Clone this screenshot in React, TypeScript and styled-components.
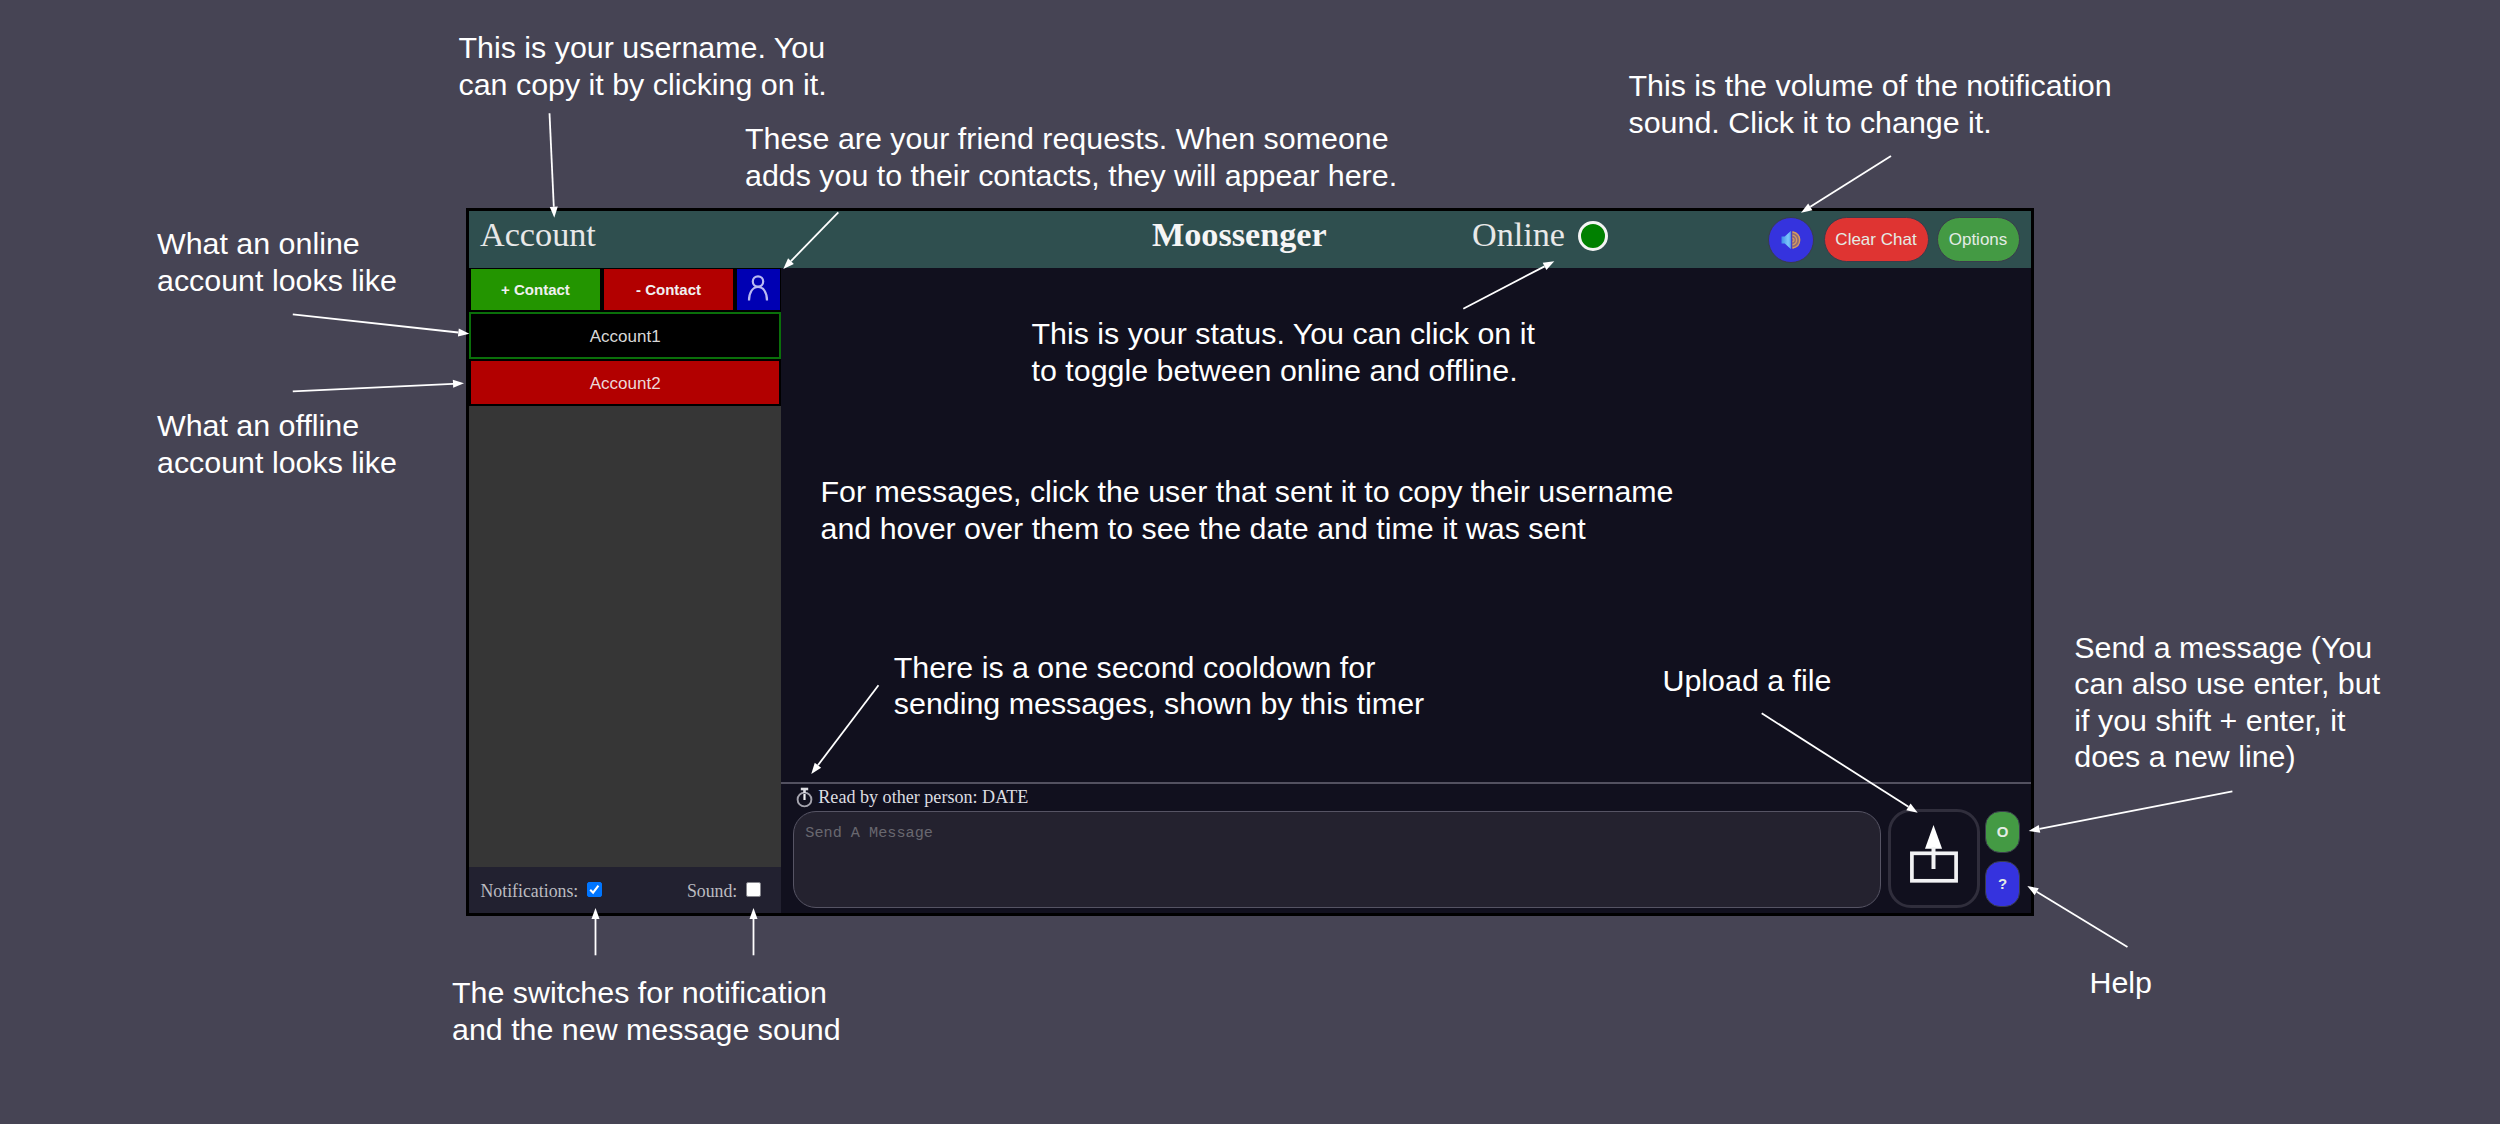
import React from "react";
import styled, { createGlobalStyle } from "styled-components";

const sans = `"Liberation Sans", Arial, sans-serif`;
const serif = `"Liberation Serif", "Times New Roman", serif`;
const mono = `"Liberation Mono", "Courier New", monospace`;

const GlobalStyle = createGlobalStyle`
  * { box-sizing: border-box; }
  body { margin: 0; background: #464454; }
  button { font: inherit; margin: 0; padding: 0; cursor: pointer; }
`;

const Page = styled.main`
  position: relative;
  display: flex;
  align-items: center;
  justify-content: center;
  width: 2500px;
  height: 1124px;
  overflow: hidden;
  background: #464454;
  font-family: ${sans};
`;

const Window = styled.section`
  display: flex;
  flex-direction: column;
  width: 1568px;
  height: 708px;
  border: 3px solid #000;
  background: #11101e;
`;

const Header = styled.header`
  display: grid;
  grid-template-columns: 672px 320px auto 1fr;
  flex: none;
  height: 57px;
  padding: 0 11.5px 0 11px;
  background: #2f4f4f;
  color: #ececec;
  font: 34.2px/38px ${serif};
`;

const HeaderText = styled.div<{ $bold?: boolean }>`
  padding-top: 5px;
  font-weight: ${(p) => (p.$bold ? 700 : 400)};
  color: ${(p) => (p.$bold ? "#f5f5f5" : "#e8e8e8")};
`;

const Status = styled.div`
  display: flex;
  align-items: flex-start;
  gap: 13px;
`;

const StatusDot = styled.span`
  width: 30px;
  height: 30px;
  margin-top: 10px;
  border: 3.5px solid #f4f4f4;
  border-radius: 50%;
  background: #008000;
`;

const HeaderActions = styled.div`
  display: flex;
  align-items: center;
  justify-content: flex-end;
  gap: 8px;
  font: 17px/20px ${sans};
`;

const Pill = styled.button<{ $color: string; $width: number; $height: number; $radius?: number }>`
  display: flex;
  align-items: center;
  justify-content: center;
  width: ${(p) => p.$width}px;
  height: ${(p) => p.$height}px;
  border: 1px solid #3a3d4c;
  border-radius: ${(p) => p.$radius ?? 23}px;
  background: ${(p) => p.$color};
  color: #e4ece4;
`;

const VolumePill = styled(Pill)`
  margin-right: 2px;
`;

const Body = styled.div`
  display: flex;
  flex: 1;
  min-height: 0;
`;

const Sidebar = styled.aside`
  display: flex;
  flex-direction: column;
  width: 312.3px;
  background: #363636;
`;

const ContactTools = styled.div`
  display: grid;
  grid-template-columns: 129px 129px 43px;
  gap: 4px;
  height: 44px;
  padding: 1px 2px 2px;
  background: #000;
`;

const ToolButton = styled.button<{ $color: string }>`
  display: flex;
  align-items: center;
  justify-content: center;
  padding-top: 1px;
  border: 0;
  background: ${(p) => p.$color};
  color: #f0f0f0;
  font: bold 15px/20px ${sans};
`;

const RequestsButton = styled(ToolButton)`
  padding: 0 1px 2px 0;
`;

const Contact = styled.button<{ $online?: boolean }>`
  flex: none;
  height: 47px;
  padding-top: 2px;
  border: 2px solid ${(p) => (p.$online ? "#0a6f0a" : "#000")};
  background: ${(p) => (p.$online ? "#000" : "#b20000")};
  color: ${(p) => (p.$online ? "#d8d8d8" : "#ecd8d8")};
  font: 17px/20px ${sans};
`;

const ContactList = styled.div`
  display: flex;
  flex-direction: column;
  flex: 1;
`;

const Switches = styled.div`
  display: flex;
  justify-content: space-between;
  align-items: center;
  height: 46px;
  padding: 1px 20px 0 11.5px;
  background: #222130;
  color: #bcbcc0;
  font: 17.8px/20px ${serif};
`;

const SwitchLabel = styled.label`
  display: flex;
  align-items: center;
  gap: 9px;
`;

const Box = styled.span<{ $on?: boolean }>`
  display: flex;
  width: 15px;
  height: 15px;
  margin-bottom: 2px;
  border: 1px solid ${(p) => (p.$on ? "#0075ff" : "#85858c")};
  border-radius: 2px;
  background: ${(p) => (p.$on ? "#0075ff" : "#fff")};
`;

const Chat = styled.div`
  display: flex;
  flex-direction: column;
  flex: 1;
`;

const Messages = styled.div`
  height: 514px;
`;

const Composer = styled.footer`
  display: flex;
  flex-direction: column;
  flex: 1;
  border-top: 2px solid #535160;
`;

const ReadLine = styled.div`
  display: flex;
  align-items: center;
  gap: 5.5px;
  height: 25px;
  padding: 1px 0 0 14.5px;
  color: #dcdce0;
  font: 18.1px/20px ${serif};
`;

const ComposeRow = styled.div`
  display: flex;
  gap: 6.5px;
  padding-left: 11.5px;
`;

const MessageInput = styled.textarea`
  width: 1088.5px;
  height: 97px;
  margin: 2px 0 0;
  padding: 13px 11.5px;
  border: 1.5px solid #565464;
  border-radius: 23px;
  background: #24222f;
  font: 15.2px/17px ${mono};
  resize: none;
  &::placeholder { color: #69686f; opacity: 1; }
`;

const UploadButton = styled.button`
  display: flex;
  align-items: center;
  justify-content: center;
  width: 92.5px;
  height: 99px;
  padding-bottom: 10px;
  border: 3px solid #302e3c;
  border-radius: 23px;
  background: #11101e;
`;

const SideButtons = styled.div`
  display: flex;
  flex-direction: column;
  gap: 8.5px;
  margin-left: -1.5px;
  padding-top: 1.5px;
  font: bold 15px/17px ${sans};
`;

const CalloutText = styled.p<{ $x: number; $y: number }>`
  position: absolute;
  left: ${(p) => p.$x}px;
  top: ${(p) => p.$y}px;
  margin: 0;
  color: #fff;
  font: 30.4px/36.6px ${sans};
  white-space: pre;
`;

const ArrowLayer = styled.svg`
  position: absolute;
  inset: 0;
  width: 2500px;
  height: 1124px;
  pointer-events: none;
`;

const callouts: { x: number; y: number; text: string }[] = [
  { x: 458.5, y: 29, text: "This is your username. You\ncan copy it by clicking on it." },
  { x: 745, y: 120, text: "These are your friend requests. When someone\nadds you to their contacts, they will appear here." },
  { x: 1628.5, y: 67, text: "This is the volume of the notification\nsound. Click it to change it." },
  { x: 157, y: 225, text: "What an online\naccount looks like" },
  { x: 157, y: 407, text: "What an offline\naccount looks like" },
  { x: 1031.5, y: 315, text: "This is your status. You can click on it\nto toggle between online and offline." },
  { x: 820.5, y: 473, text: "For messages, click the user that sent it to copy their username\nand hover over them to see the date and time it was sent" },
  { x: 893.8, y: 648.5, text: "There is a one second cooldown for\nsending messages, shown by this timer" },
  { x: 1662.5, y: 661.5, text: "Upload a file" },
  { x: 2074.3, y: 628.5, text: "Send a message (You\ncan also use enter, but\nif you shift + enter, it\ndoes a new line)" },
  { x: 2089.5, y: 963.5, text: "Help" },
  { x: 452, y: 974, text: "The switches for notification\nand the new message sound" },
];

// Each arrow runs from its tail (x1, y1) to its tip (x2, y2).
const arrows: [number, number, number, number][] = [
  [549.5, 113.3, 554.3, 217.7],
  [838.3, 212.3, 783.3, 269],
  [292.8, 314.3, 469.3, 333.7],
  [292.8, 391.3, 464, 383.3],
  [1891, 156, 1801, 212.7],
  [1463.3, 308.7, 1554.3, 261.3],
  [878.5, 685.3, 811.3, 774],
  [1761.7, 713.3, 1917.7, 812.7],
  [2232.4, 791.3, 2028.7, 831],
  [2127.5, 947, 2027.3, 886],
  [595.5, 955.3, 595.5, 908],
  [753.5, 955.3, 753.5, 908],
];

const Arrow = ({ line: [x1, y1, x2, y2] }: { line: [number, number, number, number] }) => {
  const length = Math.hypot(x2 - x1, y2 - y1);
  const ux = (x2 - x1) / length;
  const uy = (y2 - y1) / length;
  const bx = x2 - ux * 11;
  const by = y2 - uy * 11;
  return (
    <g>
      <line x1={x1} y1={y1} x2={bx} y2={by} stroke="#fff" strokeWidth="1.8" />
      <polygon
        fill="#fff"
        points={`${x2},${y2} ${bx - uy * 4},${by + ux * 4} ${bx + uy * 4},${by - ux * 4}`}
      />
    </g>
  );
};

const SpeakerIcon = () => (
  <svg width="22" height="22" viewBox="0 0 22 22">
    <defs>
      <linearGradient id="cone" x1="0" x2="1">
        <stop offset="0" stopColor="#3f8fe8" />
        <stop offset="0.7" stopColor="#7cc6fb" />
        <stop offset="1" stopColor="#5aa9f0" />
      </linearGradient>
    </defs>
    <path d="M1.5 7.5h3.2L10.8 2v18L4.7 14.5H1.5z" fill="url(#cone)" />
    <path d="M11.8 2.2c5 .6 8.6 4.200 8.600 8.800s-3.600 8.200-8.600 8.800z" fill="#8e6a78" />
    <path
      d="M12.600 3c4.200.8 7 4 7 8s-2.800 7.200-7 8M12.600 6.200c2.500.6 4 2.500 4 4.800s-1.500 4.200-4 4.800M12.600 9.200c1 .3 1.400 1 1.400 1.800s-.4 1.500-1.400 1.800"
      fill="none"
      stroke="#d59a62"
      strokeWidth="1.300"
    />
  </svg>
);

const PersonIcon = () => (
  <svg width="24" height="28" viewBox="0 0 24 28" fill="none" stroke="#b9b9f2" strokeWidth="2.2">
    <circle cx="12" cy="6.500" r="5.200" />
    <path d="M3 25.500c0-8 3.600-13.500 9-13.500s9 5.500 9 13.500" />
  </svg>
);

const TimerIcon = () => (
  <svg width="17" height="21" viewBox="0 0 17 21">
    <circle cx="8.500" cy="12.500" r="6.900" fill="none" stroke="#a5a4ae" strokeWidth="1.900" />
    <path d="M4.800.700h7.400v2.600H4.800z" fill="#dddde2" />
    <path d="M7.200 3h2.600v3H7.200z" fill="#dddde2" />
    <path d="M8.500 7v6" stroke="#f2f2f4" strokeWidth="2.200" />
  </svg>
);

const UploadIcon = () => (
  <svg width="48" height="58" viewBox="0 0 48 58">
    <rect x="1.900" y="28.300" width="44.200" height="27.500" fill="none" stroke="#f2f2f4" strokeWidth="3.700" />
    <path d="M23.500 0l8.600 23.700H15z" fill="#fff" />
    <path d="M23.500 22v22" stroke="#f2f2f4" strokeWidth="4" />
  </svg>
);

const CheckIcon = () => (
  <svg width="13" height="13" viewBox="0 0 13 13">
    <path d="M2.200 6.800l2.900 2.900 5.300-7" fill="none" stroke="#fff" strokeWidth="2.100" />
  </svg>
);

export default function App() {
  return (
    <Page>
      <GlobalStyle />
      <Window>
        <Header>
          <HeaderText>Account</HeaderText>
          <HeaderText $bold>Moossenger</HeaderText>
          <Status>
            <HeaderText>Online</HeaderText>
            <StatusDot />
          </Status>
          <HeaderActions>
            <VolumePill $color="#3533de" $width={46} $height={46}>
              <SpeakerIcon />
            </VolumePill>
            <Pill $color="#df3432" $width={105} $height={45}>Clear Chat</Pill>
            <Pill $color="#449a44" $width={83} $height={45}>Options</Pill>
          </HeaderActions>
        </Header>
        <Body>
          <Sidebar>
            <ContactTools>
              <ToolButton $color="#239500">+ Contact</ToolButton>
              <ToolButton $color="#b20000">- Contact</ToolButton>
              <RequestsButton $color="#0000b3">
                <PersonIcon />
              </RequestsButton>
            </ContactTools>
            <ContactList>
              <Contact $online>Account1</Contact>
              <Contact>Account2</Contact>
            </ContactList>
            <Switches>
              <SwitchLabel>
                Notifications:
                <Box $on>
                  <CheckIcon />
                </Box>
              </SwitchLabel>
              <SwitchLabel>
                Sound:
                <Box />
              </SwitchLabel>
            </Switches>
          </Sidebar>
          <Chat>
            <Messages />
            <Composer>
              <ReadLine>
                <TimerIcon />
                Read by other person: DATE
              </ReadLine>
              <ComposeRow>
                <MessageInput placeholder="Send A Message" />
                <UploadButton>
                  <UploadIcon />
                </UploadButton>
                <SideButtons>
                  <Pill $color="#449a44" $width={34.5} $height={42} $radius={15}>O</Pill>
                  <Pill $color="#3533de" $width={34.5} $height={45.5} $radius={15}>?</Pill>
                </SideButtons>
              </ComposeRow>
            </Composer>
          </Chat>
        </Body>
      </Window>
      <ArrowLayer viewBox="0 0 2500 1124">
        {arrows.map((line, i) => (
          <Arrow key={i} line={line} />
        ))}
      </ArrowLayer>
      {callouts.map((c) => (
        <CalloutText key={c.text} $x={c.x} $y={c.y}>
          {c.text}
        </CalloutText>
      ))}
    </Page>
  );
}
